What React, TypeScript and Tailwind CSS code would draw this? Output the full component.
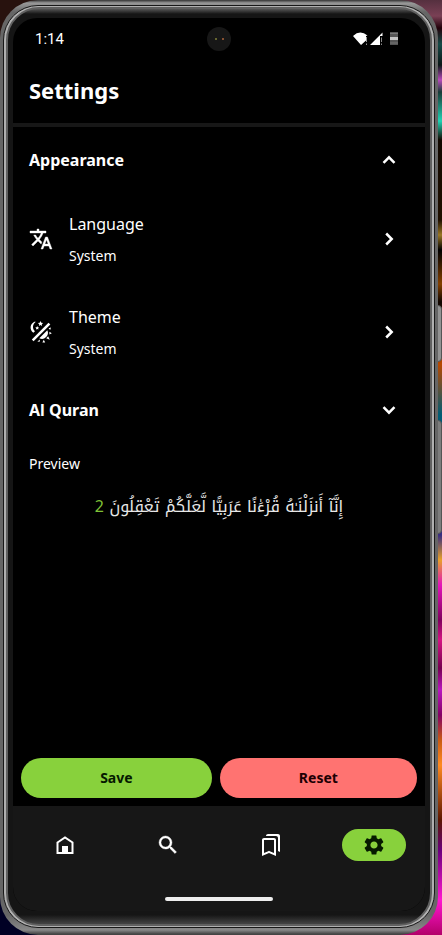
import React from "react";
import { MdOutlineBookmarks, MdSettings } from "react-icons/md";

function Chevron({ direction }: { direction: "up" | "down" | "right" }) {
  const paths = {
    up: "M6.500 14.800 12 9.300l5.500 5.500",
    down: "M6.500 9.200 12 14.700l5.500-5.500",
    right: "M9.200 6.500 14.700 12l-5.500 5.500",
  };
  return (
    <svg width="24" height="24" viewBox="0 0 24 24" fill="none" stroke="currentColor" strokeWidth="2.500" className="mr-2" aria-hidden="true">
      <path d={paths[direction]} />
    </svg>
  );
}

function TranslateIcon() {
  return (
    <svg width="24" height="24" viewBox="0 0 24 24" fill="currentColor" stroke="currentColor" strokeWidth="0.400" aria-hidden="true">
      <path d="M12.87 15.07l-2.54-2.51.03-.03A17.520 17.520 0 0 0 14.070 6H17V4h-7V2H8v2H1v1.990h11.170C11.500 7.920 10.440 9.750 9 11.350 8.070 10.320 7.300 9.190 6.690 8h-2c.73 1.630 1.730 3.170 2.980 4.560l-5.090 5.020L4 19l5-5 3.110 3.110.76-2.040zM18.500 10h-2L12 22h2l1.120-3h4.750L21 22h2l-4.500-12zm-2.620 7l1.620-4.330L19.120 17h-3.240z" />
    </svg>
  );
}

function SearchIcon() {
  return (
    <svg width="24" height="24" viewBox="0 0 24 24" fill="currentColor" stroke="currentColor" strokeWidth="0.400" aria-hidden="true">
      <path d="M15.500 14h-.79l-.28-.27A6.471 6.471 0 0 0 16 9.500 6.500 6.500 0 1 0 9.500 16c1.610 0 3.090-.59 4.230-1.570l.27.28v.79l5 4.990L20.490 19l-4.990-5zm-6 0C7.010 14 5 11.990 5 9.500S7.010 5 9.500 5 14 7.010 14 9.500 11.990 14 9.500 14z" />
    </svg>
  );
}

function HomeIcon() {
  return (
    <svg width="24" height="24" viewBox="0 0 24 24" aria-hidden="true">
      <path d="M4.500 9.500 12 4.500 19.500 9.500v10.500h-15z" fill="none" stroke="currentColor" strokeWidth="2" />
      <path d="M9 13h6v7H9z" fill="currentColor" />
    </svg>
  );
}

function ThemeIcon() {
  return (
    <svg width="24" height="24" viewBox="0 0 24 24" fill="currentColor" aria-hidden="true">
      <path d="M6 1.500C.8 3.500.2 9.500 4.300 12.800L6 11.200C3.300 9 3.200 4.500 6.600 2z" />
      <path d="m11.500 1 .8 1.700 1.800.2-1.300 1.300.3 1.800-1.600-.9-1.600.9.300-1.800-1.300-1.300 1.800-.2zM8.200 6l.6 1.200 1.300.2-.9.9.2 1.300-1.200-.6-1.200.6.200-1.300-.9-.9 1.300-.2z" />
      <path d="m19.500 2.700 1.800 1.800L4.600 21.200 2.800 19.400z" />
      <path d="M18.300 10.200A6 6 0 0 1 10.300 18.200z" />
      <path d="m19.600 8.200 2.400-.6-.8 2.400zM20.400 11.800l2.400 1.400-2.400 1.400zM19.200 16.200l1.600 3.600-3.600-1.600zM14.800 19.800l1.400 2.600h-2.800zM10.600 19.400l.4 2.200-2.600.2z" />
    </svg>
  );
}

function StatusIcons() {
  return (
    <svg width="46" height="14" viewBox="0 0 46 14" aria-hidden="true">
      <path d="M0 4Q7-2.500 14.500 3.500L13 4v4.500L8 13z" fill="#fff" />
      <path d="M13.500 5v5M13.500 11.500v1.500" stroke="#999" strokeWidth="1" />
      <path d="M17 13 29.500.5V4H27v9z" fill="#fff" />
      <path d="M28.500 5.500v4.500M28.500 11.500v1.500" stroke="#888" strokeWidth="1" />
      <path d="M37 0h8v13h-8z" fill="#555" />
      <path d="M37 1.500h8M37 11h8" stroke="#777" strokeWidth="1" />
      <path d="M37 6.500h8" stroke="#c4c4c4" strokeWidth="3" />
    </svg>
  );
}

function SectionHeader({ title, open }: { title: string; open: boolean }) {
  return (
    <button type="button" aria-expanded={open} className="flex h-16 w-full items-center justify-between px-4 text-left">
      <span className="text-base font-bold">{title}</span>
      <Chevron direction={open ? "up" : "down"} />
    </button>
  );
}

function SettingRow({ icon, title, value }: { icon: React.ReactNode; title: string; value: string }) {
  return (
    <button type="button" className="flex h-[93px] w-full items-center gap-4 px-4 text-left">
      {icon}
      <span className="flex flex-1 flex-col gap-2 pt-0.5">
        <span className="text-base leading-6">{title}</span>
        <span className="text-sm leading-6">{value}</span>
      </span>
      <Chevron direction="right" />
    </button>
  );
}

function NavItem({ label, active, children }: { label: string; active?: boolean; children: React.ReactNode }) {
  return (
    <button type="button" aria-label={label} className="flex flex-1 justify-center">
      <span
        className={
          active
            ? "flex h-8 w-16 items-center justify-center rounded-full bg-[#88d13c] text-[#061a00]"
            : "flex h-8 w-16 items-center justify-center"
        }
      >
        {children}
      </span>
    </button>
  );
}

export default function App() {
  return (
    <div className="relative flex min-h-screen bg-[linear-gradient(180deg,#55303f_0px,#7a4055_16px,#210009_28px,#164b48_44px,#0b1717_65px,#b84bba_80px,#183c37_92px,#21d2b4_121px,#120800_140px,#201000_220px,#9a7726_235px,#000_250px,#854000_284px,#100500_302px,#b84800_364px,#005c74_415px,#382d80_535px,#e8a028_560px,#e414ba_585px,#80005e_620px,#d51483_640px,#760050_668px,#b918c0_690px,#840065_715px,#c85a13_740px,#ff8a20_765px,#5c1600_820px,#6a007c_850px,#ff16d0_900px,#b3006a_935px)] pr-1 font-['Noto_Sans','Open_Sans',sans-serif] text-white">
      <div className="absolute top-0 left-0 h-10 w-10 bg-[#28120e]" />
      <div className="absolute bottom-0 left-0 h-12 w-12 bg-[#000024]" />
      <div className="absolute top-[305px] right-0 h-[57px] w-2 rounded-r-sm border border-[#555] bg-[#929292]" />
      <div className="absolute top-[420px] right-0 h-[114px] w-2 rounded-r-sm border border-[#555] bg-[#7d7d7d]" />

      <div className="relative flex flex-1 rounded-[38px] bg-[linear-gradient(180deg,#333_0px,#999_3px,#666_12px,#666_915px,#888_930px,#444_934px)] p-[3px] pt-[5px] pb-[7px]">
        <div className="flex flex-1 rounded-[35px] border border-[#181818] bg-[#b0b0b0] p-[2px] pt-px pb-px">
          <div className="flex flex-1 rounded-[33px] border-2 border-[#606060] bg-[linear-gradient(180deg,#555_0px,#151515_5px,#151515_99%,#444_100%)] px-[5px] pt-[9px] pb-[13px]">
            <main className="flex flex-1 flex-col overflow-hidden rounded-[24px] bg-black">
              <div className="relative flex h-[42px] items-center justify-between pr-[26px] pl-[22px]">
                <span className="font-['Roboto',sans-serif] text-[15px]">1:14</span>
                <span className="absolute left-1/2 flex size-6 -translate-x-1/2 items-center justify-center gap-[5px] rounded-full bg-[#171717]">
                  <span className="size-[2px] bg-[#66662f]" />
                  <span className="size-[2px] bg-[#865031]" />
                </span>
                <StatusIcons />
              </div>
              <header className="flex h-[67px] items-center border-b-4 border-[#171717] px-4 pb-1">
                <h1 className="text-[22px] leading-8 font-bold">Settings</h1>
              </header>

              <div className="pt-px">
                <SectionHeader title="Appearance" open />
                <SettingRow icon={<TranslateIcon />} title="Language" value="System" />
                <SettingRow icon={<ThemeIcon />} title="Theme" value="System" />
                <SectionHeader title="Al Quran" open={false} />
              </div>

              <section className="px-4 pt-3">
                <h2 className="text-sm leading-5">Preview</h2>
                <p dir="rtl" lang="ar" className="mt-3 text-center font-['Noto_Sans','Noto_Kufi_Arabic',sans-serif] text-base leading-10 whitespace-nowrap text-[#e8e8e8]">
                  <span className="font-['Noto_Kufi_Arabic','Noto_Sans_Arabic',sans-serif]">إِنَّآ أَنزَلْنَـٰهُ قُرْءَٰنًا عَرَبِيًّا لَّعَلَّكُمْ تَعْقِلُونَ </span>
                  <span className="text-[#7fc236]">2</span>
                </p>
              </section>

              <div className="mt-auto flex gap-2 p-2">
                <button type="button" className="h-10 flex-auto rounded-full bg-[#88d13c] text-sm font-bold text-[#061a00]">
                  Save
                </button>
                <button type="button" className="h-10 flex-auto rounded-full bg-[#ff7371] text-sm font-bold text-[#1c0003]">
                  Reset
                </button>
              </div>

              <footer className="flex flex-col items-center bg-[#171717] pt-[23px] pb-[10px]">
                <nav className="flex w-full">
                  <NavItem label="Home"><HomeIcon /></NavItem>
                  <NavItem label="Search"><SearchIcon /></NavItem>
                  <NavItem label="Bookmarks"><MdOutlineBookmarks size={24} /></NavItem>
                  <NavItem label="Settings" active><MdSettings size={24} /></NavItem>
                </nav>
                <div className="mt-9 h-1 w-[108px] rounded-full bg-[#eee]" />
              </footer>
            </main>
          </div>
        </div>
      </div>
    </div>
  );
}
